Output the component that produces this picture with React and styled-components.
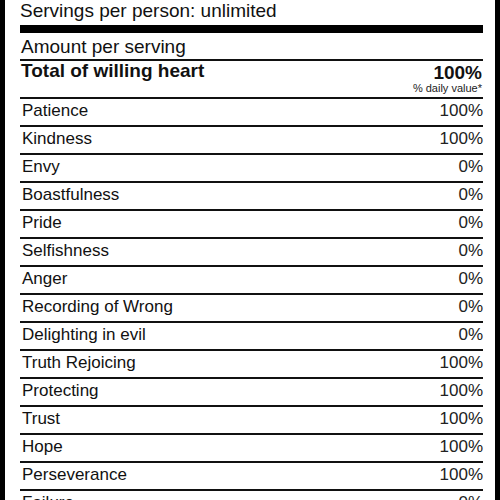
import React from "react";
import styled, { createGlobalStyle } from "styled-components";

/* ================= STYLES ================= */

const GlobalStyle = createGlobalStyle`
  html, body {
    margin: 0;
    padding: 0;
    background: #fff;
    overflow: hidden;
  }
  body {
    font-family: "Liberation Sans", Arial, sans-serif;
    color: #111;
  }
`;

const Label = styled.div`
  width: 500px;
  box-sizing: border-box;
  margin-top: -26px;
  border: 5px solid #000;
  padding: 0 12px 0 15px;
  background: #fff;
`;

const HeaderLine = styled.div`
  font-size: 19px;
  line-height: 21px;
  white-space: nowrap;
`;

const ThickBar = styled.div`
  height: 8px;
  margin-top: 4px;
  background: #000;
`;

const AmountRow = styled.div`
  font-size: 19px;
  line-height: 22px;
  padding: 3px 0 1px 1px;
  border-bottom: 2px solid #111;
`;

const TotalRow = styled.div`
  display: flex;
  justify-content: space-between;
  align-items: flex-start;
  padding: 0 1px 3px 1px;
  border-bottom: 2px solid #111;
`;

const TotalLabel = styled.div`
  font-size: 19px;
  line-height: 19px;
  font-weight: 700;
`;

const TotalValue = styled.div`
  display: flex;
  flex-direction: column;
  align-items: flex-end;
  padding-top: 2px;
`;

const BigPercent = styled.div`
  font-size: 19px;
  line-height: 19px;
  font-weight: 700;
`;

const DailyNote = styled.div`
  font-size: 11px;
  line-height: 12px;
  color: #222;
`;

const Row = styled.div`
  display: flex;
  justify-content: space-between;
  font-size: 17px;
  line-height: 24px;
  padding: 0 0 2px 2px;
  border-bottom: 2px solid #111;
`;

const Value = styled.span`
  color: #222;
`;

/* ================= DATA ================= */

const items = [
  ["Patience", "100%"],
  ["Kindness", "100%"],
  ["Envy", "0%"],
  ["Boastfulness", "0%"],
  ["Pride", "0%"],
  ["Selfishness", "0%"],
  ["Anger", "0%"],
  ["Recording of Wrong", "0%"],
  ["Delighting in evil", "0%"],
  ["Truth Rejoicing", "100%"],
  ["Protecting", "100%"],
  ["Trust", "100%"],
  ["Hope", "100%"],
  ["Perseverance", "100%"],
  ["Failure", "0%"],
];

/* ================= COMPONENT ================= */

function App() {
  return (
    <>
      <GlobalStyle />
      <Label>
        <HeaderLine>Long serving size: 1 giving heart</HeaderLine>
        <HeaderLine>Servings per person: unlimited</HeaderLine>
        <ThickBar />
        <AmountRow>Amount per serving</AmountRow>
        <TotalRow>
          <TotalLabel>Total of willing heart</TotalLabel>
          <TotalValue>
            <BigPercent>100%</BigPercent>
            <DailyNote>% daily value*</DailyNote>
          </TotalValue>
        </TotalRow>
        {items.map(([name, value]) => (
          <Row key={name}>
            <span>{name}</span>
            <Value>{value}</Value>
          </Row>
        ))}
      </Label>
    </>
  );
}

export default App;
